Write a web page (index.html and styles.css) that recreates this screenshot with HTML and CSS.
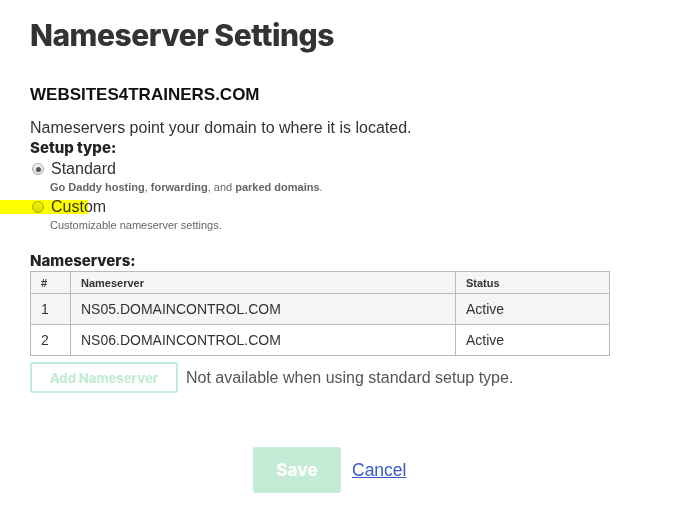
FILE: index.html
```html
<!DOCTYPE html>
<html>
<head>
<meta charset="utf-8">
<link rel="stylesheet" href="styles.css">
</head>
<body>
<div class="page">
  <h1 class="title">Nameserver Settings</h1>
  <div class="domain">WEBSITES4TRAINERS.COM</div>
  <p class="intro">Nameservers point your domain to where it is located.</p>
  <div class="label setup-label">Setup type:</div>
  <div class="option">
    <div class="opt-row"><span class="radio checked"></span><span class="opt-name">Standard</span></div>
    <div class="opt-desc"><b>Go Daddy hosting</b>, <b>forwarding</b>, and <b>parked domains</b>.</div>
  </div>
  <div class="option option-2">
    <div class="opt-row"><span class="radio"></span><span class="opt-name">Custom</span></div>
    <div class="opt-desc">Customizable nameserver settings.</div>
  </div>
  <div class="label ns-label">Nameservers:</div>
  <table class="ns-table">
    <thead>
      <tr><th class="c-num">#</th><th class="c-ns">Nameserver</th><th class="c-st">Status</th></tr>
    </thead>
    <tbody>
      <tr class="odd"><td class="c-num">1</td><td>NS05.DOMAINCONTROL.COM</td><td>Active</td></tr>
      <tr><td class="c-num">2</td><td>NS06.DOMAINCONTROL.COM</td><td>Active</td></tr>
    </tbody>
  </table>
  <div class="add-row">
    <button class="btn-add">Add Nameserver</button>
    <span class="note">Not available when using standard setup type.</span>
  </div>
  <div class="actions">
    <button class="btn-save">Save</button>
    <a class="cancel" href="#">Cancel</a>
  </div>
</div>
<div class="highlight"></div>
</body>
</html>
```

FILE: styles.css
```css
html, body {
  margin: 0;
  padding: 0;
  background: #fff;
}
body {
  font-family: "Liberation Sans", Arial, sans-serif;
  color: #333;
  position: relative;
}
.page {
  padding: 17px 30px 0 30px;
}
.title {
  margin: 0;
  font-family: Inter, "Liberation Sans", sans-serif;
  font-weight: 800;
  font-size: 30px;
  line-height: 36px;
  letter-spacing: -0.5px;
  color: #333;
}
.domain {
  margin-top: 33px;
  font-size: 17px;
  font-weight: bold;
  line-height: 18px;
  color: #111;
}
.intro {
  margin: 15px 0 0 0;
  font-size: 16px;
  line-height: 18px;
  color: #333;
}
.label {
  font-family: Inter, "Liberation Sans", sans-serif;
  font-weight: 800;
  font-size: 15px;
  line-height: 20px;
  color: #222;
}
.setup-label {
  margin-top: 1px;
}
.option {
  margin-top: 1px;
}
.option-2 {
  margin-top: 3px;
}
.opt-row {
  display: flex;
  align-items: center;
  height: 20px;
}
.radio {
  width: 10px;
  height: 10px;
  border: 1px solid #aaa;
  border-radius: 50%;
  background: linear-gradient(#f4f4f4, #dcdcdc);
  margin: 0 7px 0 2px;
  position: relative;
  box-sizing: content-box;
}
.radio.checked::after {
  content: "";
  position: absolute;
  left: 2.5px;
  top: 2.5px;
  width: 5px;
  height: 5px;
  border-radius: 50%;
  background: #555;
}
.opt-name {
  font-size: 16px;
  line-height: 18px;
  color: #333;
}
.opt-desc {
  margin-left: 20px;
  font-size: 11px;
  line-height: 14px;
  color: #666;
  margin-top: 1px;
}
.opt-desc b {
  font-weight: bold;
}
.ns-label {
  margin-top: 19px;
}
.ns-table {
  margin-top: 0;
  width: 580px;
  border-collapse: collapse;
  font-size: 14px;
  color: #333;
}
.ns-table th, .ns-table td {
  border: 1px solid #bbb;
  text-align: left;
  padding: 0 10px;
}
.ns-table th {
  height: 21px;
  font-size: 11px;
  font-weight: bold;
  background: #f5f5f5;
  color: #333;
}
.ns-table td {
  height: 30px;
}
.ns-table tr.odd td {
  background: #f5f5f5;
}
.c-num {
  width: 19px;
}
.c-st {
  width: 133px;
}
.add-row {
  margin-top: 6px;
  display: flex;
  align-items: center;
}
.btn-add {
  width: 148px;
  height: 31px;
  border: 2px solid #c4ebd6;
  border-radius: 2px;
  background: #fff;
  color: #c4ebd6;
  font-family: Inter, "Liberation Sans", sans-serif;
  font-weight: 800;
  font-size: 13px;
  padding: 0;
}
.note {
  margin-left: 8px;
  font-size: 16px;
  color: #555;
}
.actions {
  margin-top: 54px;
  display: flex;
  align-items: center;
  padding-left: 223px;
}
.btn-save {
  width: 88px;
  height: 46px;
  border: none;
  border-radius: 3px;
  background: #c4ebd6;
  color: #fff;
  font-family: Inter, "Liberation Sans", sans-serif;
  font-weight: 800;
  font-size: 17px;
  padding: 0;
}
.cancel {
  margin-left: 11px;
  font-size: 17.5px;
  color: #3a5bc7;
  text-decoration: underline;
}
.highlight {
  position: absolute;
  left: 0;
  top: 200px;
  width: 88px;
  height: 14px;
  background: #ffff00;
  mix-blend-mode: multiply;
}
```
